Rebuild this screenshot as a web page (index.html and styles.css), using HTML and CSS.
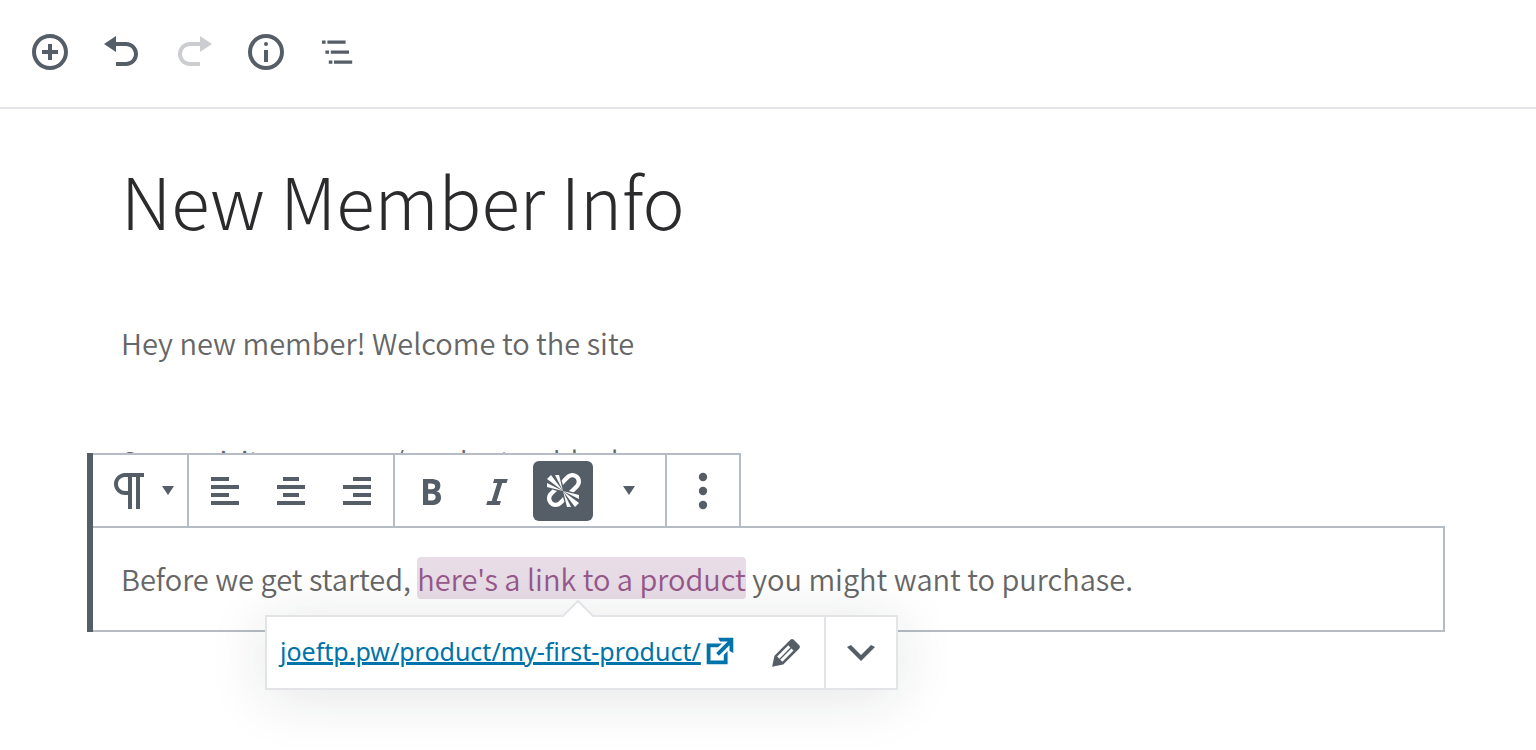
FILE: index.html
```html
<!DOCTYPE html>
<html lang="en">
<head>
  <meta charset="UTF-8">
  <meta name="viewport" content="width=device-width, initial-scale=1">
  <title>New Member Info</title>
  <link rel="stylesheet" href="styles.css">
</head>
<body>
  <header class="header">
    <button class="header-button" type="button" aria-label="Add block">
      <svg class="icon" viewBox="0 0 20 20"><path d="M10 1c-5 0-9 4-9 9s4 9 9 9 9-4 9-9-4-9-9-9zm0 16c-3.900 0-7-3.100-7-7s3.100-7 7-7 7 3.100 7 7-3.100 7-7 7zm1-11H9v3H6v2h3v3h2v-3h3V9h-3V6z"/></svg>
    </button>
    <button class="header-button" type="button" aria-label="Undo">
      <svg class="icon" viewBox="0 0 20 20"><path d="M12 5H7V2L1 6l6 4V7h5c2.200 0 4 1.800 4 4s-1.800 4-4 4H7v2h5c3.300 0 6-2.700 6-6s-2.700-6-6-6z"/></svg>
    </button>
    <button class="header-button" type="button" aria-label="Redo" disabled>
      <svg class="icon" viewBox="0 0 20 20"><path d="M8 5h5V2l6 4-6 4V7H8c-2.200 0-4 1.800-4 4s1.800 4 4 4h5v2H8c-3.300 0-6-2.700-6-6s2.700-6 6-6z"/></svg>
    </button>
    <button class="header-button" type="button" aria-label="Content structure">
      <svg class="icon" viewBox="0 0 20 20"><path fill-rule="evenodd" d="M10 1a9 9 0 1 0 0 18 9 9 0 0 0 0-18zm0 16a7 7 0 1 1 0-14 7 7 0 0 1 0 14z"/><circle cx="10" cy="6" r="1"/><path d="M9 9h2v6H9z"/></svg>
    </button>
    <button class="header-button" type="button" aria-label="Block navigation">
      <svg class="icon" viewBox="0 0 20 20"><path d="M2 4.200h1.800v1.700H2zM4.700 4.200h9.100v1.700H4.700zM3.700 9.200h1.800v1.700H3.700zM6.400 9.200h9.100v1.700H6.400zM5.400 14.200h1.800v1.700H5.400zM8 14.200h9.100v1.700H8z"/></svg>
    </button>
  </header>

  <main class="editor">
    <h1 class="title">New Member Info</h1>
    <p class="text">Hey new member! Welcome to the site</p>
    <p class="text">Some visitors see an/product as block</p>

    <section class="block">
      <div class="toolbar">
        <div class="toolbar-group">
          <button class="tool tool-type" type="button" aria-label="Change block type">
            <svg class="icon-large" viewBox="0 0 24 24"><path d="M11 5v7H9.500C7.600 12 6 10.400 6 8.500S7.600 5 9.500 5H11m8-2H9.500C6.500 3 4 5.500 4 8.500S6.500 14 9.500 14H11v7h2V5h2v16h2V5h2V3z"/></svg>
            <span class="caret"></span>
          </button>
        </div>
        <div class="toolbar-group">
          <button class="tool" type="button" aria-label="Align left">
            <svg class="icon" viewBox="0 0 20 20"><path d="M12 5V3H3v2h9zm5 4V7H3v2h14zm-5 4v-2H3v2h9zm5 4v-2H3v2h14z"/></svg>
          </button>
          <button class="tool" type="button" aria-label="Align center">
            <svg class="icon" viewBox="0 0 20 20"><path d="M14 5V3H6v2h8zm3 4V7H3v2h14zm-3 4v-2H6v2h8zm3 4v-2H3v2h14z"/></svg>
          </button>
          <button class="tool" type="button" aria-label="Align right">
            <svg class="icon" viewBox="0 0 20 20"><path d="M17 5V3H8v2h9zm0 4V7H3v2h14zm0 4v-2H8v2h9zm0 4v-2H3v2h14z"/></svg>
          </button>
        </div>
        <div class="toolbar-group">
          <button class="tool" type="button" aria-label="Bold">
            <svg class="icon" viewBox="0 0 20 20"><path d="M6 4v13h4.540c1.370 0 2.460-.33 3.260-1 .8-.66 1.200-1.580 1.200-2.770 0-.84-.17-1.510-.51-2.010s-.9-.85-1.670-1.030v-.09c.57-.1 1.020-.4 1.360-.9s.51-1.130.51-1.910c0-1.140-.39-1.980-1.170-2.500C12.750 4.260 11.500 4 9.780 4H6zm2.570 5.150V6.260h1.360c.73 0 1.270.11 1.610.32.34.22.51.58.51 1.070 0 .54-.16.92-.47 1.150s-.82.35-1.510.35h-1.500zm0 2.190h1.600c1.440 0 2.160.53 2.160 1.610 0 .6-.17 1.050-.51 1.340s-.86.43-1.570.43H8.570v-3.380z"/></svg>
          </button>
          <button class="tool" type="button" aria-label="Italic">
            <svg class="icon" viewBox="0 0 20 20"><path d="M14.780 6h-2.130l-2.800 9h2.120l-.62 2H4.600l.62-2h2.140l2.800-9H8.030l.62-2h6.750z"/></svg>
          </button>
          <button class="tool is-active" type="button" aria-label="Unlink" aria-pressed="true">
            <svg class="icon" viewBox="0 0 20 20"><path d="M17.740 2.260c1.680 1.690 1.680 4.410 0 6.100l-1.530 1.520c-.32.33-.69.58-1.080.77L13 10l1.690-1.640.76-.77.76-.76c.84-.84.84-2.200 0-3.040-.84-.85-2.200-.85-3.040 0l-.77.76-.76.76L10 7l-.65-2.140c.19-.38.44-.75.77-1.070l1.520-1.530c1.690-1.680 4.420-1.680 6.100 0zM2 4l8 6-6-8zm4-2l4 8-2-8H6zM2 6l8 4-8-2V6zm7.360 7.690L10 13l.74 2.350-1.380 1.390c-1.690 1.680-4.410 1.680-6.100 0-1.680-1.680-1.680-4.420 0-6.100l1.390-1.380L7 10l-.69.64-1.520 1.530c-.85.84-.85 2.200 0 3.040.84.85 2.200.85 3.040 0zM18 16l-8-6 6 8zm-4 2l-4-8 2 8h2zm4-4l-8-4 8 2v2z"/></svg>
          </button>
          <button class="tool" type="button" aria-label="More rich text controls">
            <span class="caret"></span>
          </button>
        </div>
        <div class="toolbar-group">
          <button class="tool" type="button" aria-label="More options">
            <svg class="icon" viewBox="0 0 20 20"><circle cx="10" cy="3" r="2.100"/><circle cx="10" cy="10" r="2.100"/><circle cx="10" cy="17" r="2.100"/></svg>
          </button>
        </div>
      </div>

      <p class="block-text">Before we get started, <a class="link" href="#product">here's a link to a product</a> you might want to purchase.</p>

      <div class="popover">
        <svg class="popover-arrow" viewBox="0 0 32 18"><path class="arrow-fill" d="M1 18L16 2l15 16z"/><path class="arrow-line" d="M1 17L16 2l15 15"/></svg>
        <div class="popover-main">
          <a class="url" href="#product"><span class="url-text">joeftp.pw/product/my-first-product/</span><svg class="icon-external" viewBox="0 0 20 20"><path d="M9 3h8v8l-2-1V6.920l-5.600 5.590-1.410-1.410L14.080 5H10zm3 12v-3l2-2v7H3V6h8L9 8H5v7h7z"/></svg></a>
          <button class="popover-button" type="button" aria-label="Edit">
            <svg class="icon" viewBox="0 0 20 20"><path d="M13.890 3.390l2.710 2.720c.46.46.42 1.240.03 1.640l-8.010 8.020-5.560 1.160 1.160-5.580s7.600-7.630 7.990-8.030c.39-.39 1.220-.39 1.680.07zm-2.730 2.790l-5.590 5.610 1.110 1.110 5.540-5.650zm-2.970 8.230l5.580-5.600-1.070-1.080-5.590 5.600z"/></svg>
          </button>
        </div>
        <button class="popover-button popover-toggle" type="button" aria-label="Link settings">
          <svg class="icon" viewBox="0 0 20 20"><path d="M5 6l5 5 5-5 2 1-7 7-7-7z"/></svg>
        </button>
      </div>
    </section>
  </main>
</body>
</html>
```
FILE: styles.css
```css
* {
  box-sizing: border-box;
}
body {
  min-height: 100vh;
  margin: 0;
  background: #fff;
  color: #666;
  font-family: "Noto Sans CJK SC", "Open Sans", sans-serif;
  font-size: 29px;
  font-weight: 350;
  line-height: 44px;
}
button {
  display: flex;
  align-items: center;
  justify-content: center;
  padding: 0;
  border: none;
  background: none;
  color: #555d66;
  cursor: pointer;
}
svg {
  display: block;
  flex-shrink: 0;
  fill: currentColor;
}
.icon {
  width: 40px;
  height: 40px;
}
.icon-large {
  width: 48px;
  height: 48px;
}
.header {
  display: flex;
  align-items: center;
  height: 109px;
  padding: 0 14px 3px;
  border-bottom: 2px solid #e2e4e7;
}
.header-button {
  width: 72px;
  height: 72px;
}
.header-button:disabled {
  opacity: 0.3;
}
.editor {
  padding: 35px 91px 120px 87px;
}
.title {
  margin: 0 0 66px;
  padding-left: 34px;
  color: #2b2b2d;
  font-size: 71px;
  font-weight: 300;
  line-height: 110px;
}
.text {
  margin: 0 0 74px;
  padding-left: 34px;
}

/* selected block */
.block {
  position: relative;
  margin-top: -30px;
  padding: 28px 32px 30px;
  border: 2px solid #b5bcc2;
}
.block::before {
  content: "";
  position: absolute;
  top: -75px;
  bottom: -2px;
  left: -2px;
  width: 6px;
  background: #555d66;
}
.block-text {
  margin: 0;
}
.link {
  border-radius: 4px;
  background: #e8dce6;
  color: #96588a;
  text-decoration: none;
}
.toolbar {
  position: absolute;
  bottom: 100%;
  left: 4px;
  display: flex;
  height: 75px;
  border: 2px solid #b5bcc6;
  border-left: none;
  background: #fff;
}
.toolbar-group {
  display: flex;
  align-items: center;
  padding: 0 3px;
}
.toolbar-group + .toolbar-group {
  border-left: 2px solid #b5bcc6;
}
.tool {
  width: 60px;
  height: 60px;
  margin: 0 3px;
}
.tool-type {
  gap: 8px;
  width: 82px;
}
.tool.is-active {
  border-radius: 6px;
  background: #555d66;
  color: #fff;
}
.caret {
  border: 6px solid transparent;
  border-top: 9px solid #555d66;
  border-bottom: none;
}

/* link popover */
.popover {
  position: absolute;
  top: 87px;
  left: 176px;
  display: flex;
  height: 75px;
  border: 2px solid #e2e4e7;
  background: #fff;
  box-shadow: 0 6px 60px rgba(25, 30, 35, 0.12);
}
.popover-arrow {
  position: absolute;
  top: -18px;
  left: 50%;
  width: 32px;
  height: 18px;
  margin-left: -19px;
}
.arrow-fill {
  fill: #fff;
}
.arrow-line {
  fill: none;
  stroke: #e2e4e7;
  stroke-width: 2;
}
.popover-main {
  display: flex;
  align-items: center;
  padding: 0 2px 0 13px;
}
.url {
  display: flex;
  align-items: center;
  margin-right: 11px;
  padding-bottom: 4px;
  color: #0073aa;
  font-family: "Noto Sans", sans-serif;
  font-size: 25px;
  font-weight: 400;
  line-height: 36px;
}
.url-text {
  text-decoration: underline;
  text-decoration-thickness: 2px;
}
.icon-external {
  width: 38px;
  height: 38px;
}
.popover-button {
  width: 72px;
  height: 71px;
}
.popover-toggle {
  border-left: 2px solid #e2e4e7;
}
```
